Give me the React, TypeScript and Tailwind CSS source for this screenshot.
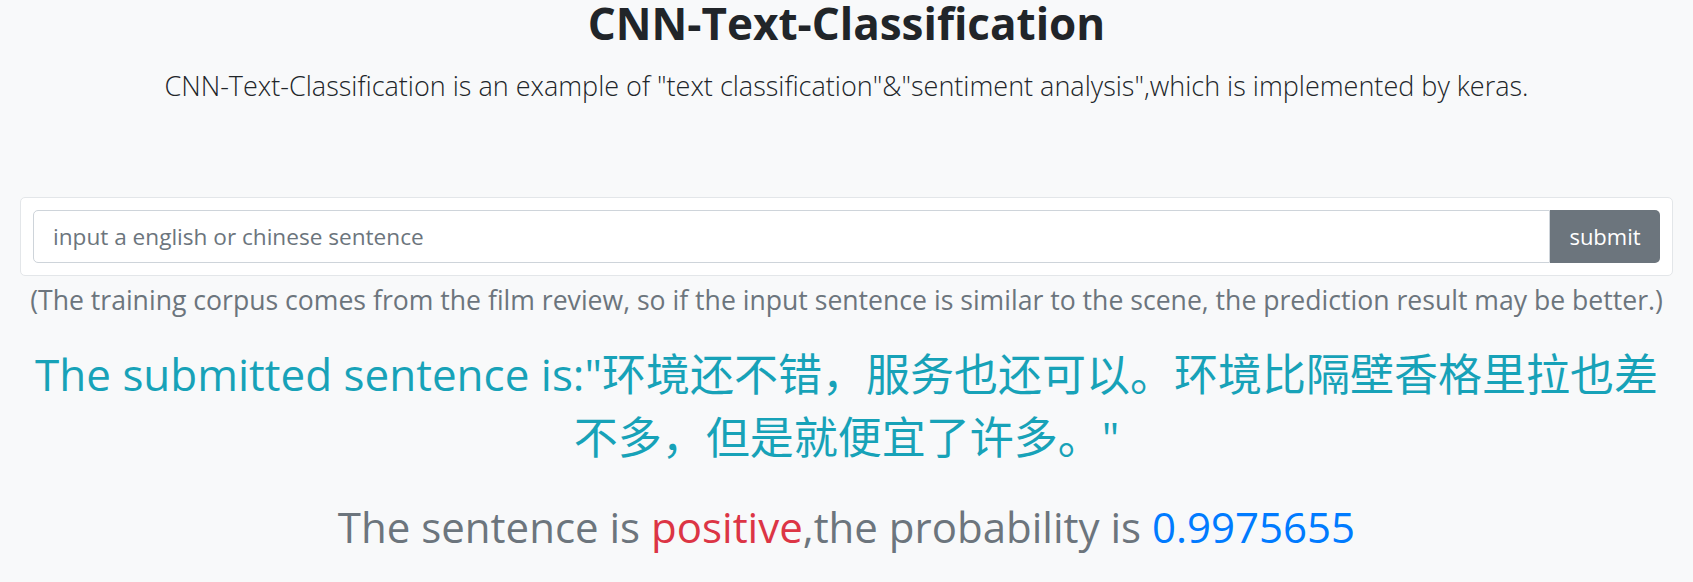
export default function App() {
  const sans = "font-['Open_Sans','Noto_Sans_CJK_SC',sans-serif]";

  return (
    <main className={`min-h-[582px] bg-[#f8f9fa] px-[20px] text-center ${sans}`}>
      <h1 className="text-[44px] font-bold leading-[46px] text-[#212529]">
        CNN-Text-Classification
      </h1>
      <p className="mt-[22px] text-[27px] font-light leading-[36px] text-[#212529]">
        CNN-Text-Classification is an example of "text classification"&amp;"sentiment analysis",which is implemented by keras.
      </p>

      <div className="mt-[93px] flex rounded-[5px] border border-[#e3e6e9] bg-white p-[12px]">
        <input
          type="text"
          placeholder="input a english or chinese sentence"
          className="h-[53px] flex-1 rounded-l-[5px] border border-[#ced4da] bg-white px-[19px] text-[22.6px] text-[#495057] placeholder:text-[#6c757d] outline-none"
        />
        <button className="h-[53px] w-[110px] rounded-r-[5px] bg-[#6c757d] text-[22px] text-white">
          submit
        </button>
      </div>
      <p className="mt-[6px] text-[26.6px] leading-[36px] text-[#6c757d]">
        (The training corpus comes from the film review, so if the input sentence is similar to the scene, the prediction result may be better.)
      </p>

      <h2 className="mt-[25px] text-[44px] leading-[63px] text-[#17a2b8]">
        The submitted sentence is:"环境还不错，服务也还可以。环境比隔壁香格里拉也差不多，但是就便宜了许多。"
      </h2>

      <h3 className="mt-[33px] text-[42px] leading-[50px] text-[#6c757d]">
        The sentence is <span className="text-[#dc3545]">positive</span>,the probability is{" "}
        <span className="text-[#007bff]">0.9975655</span>
      </h3>
    </main>
  );
}
